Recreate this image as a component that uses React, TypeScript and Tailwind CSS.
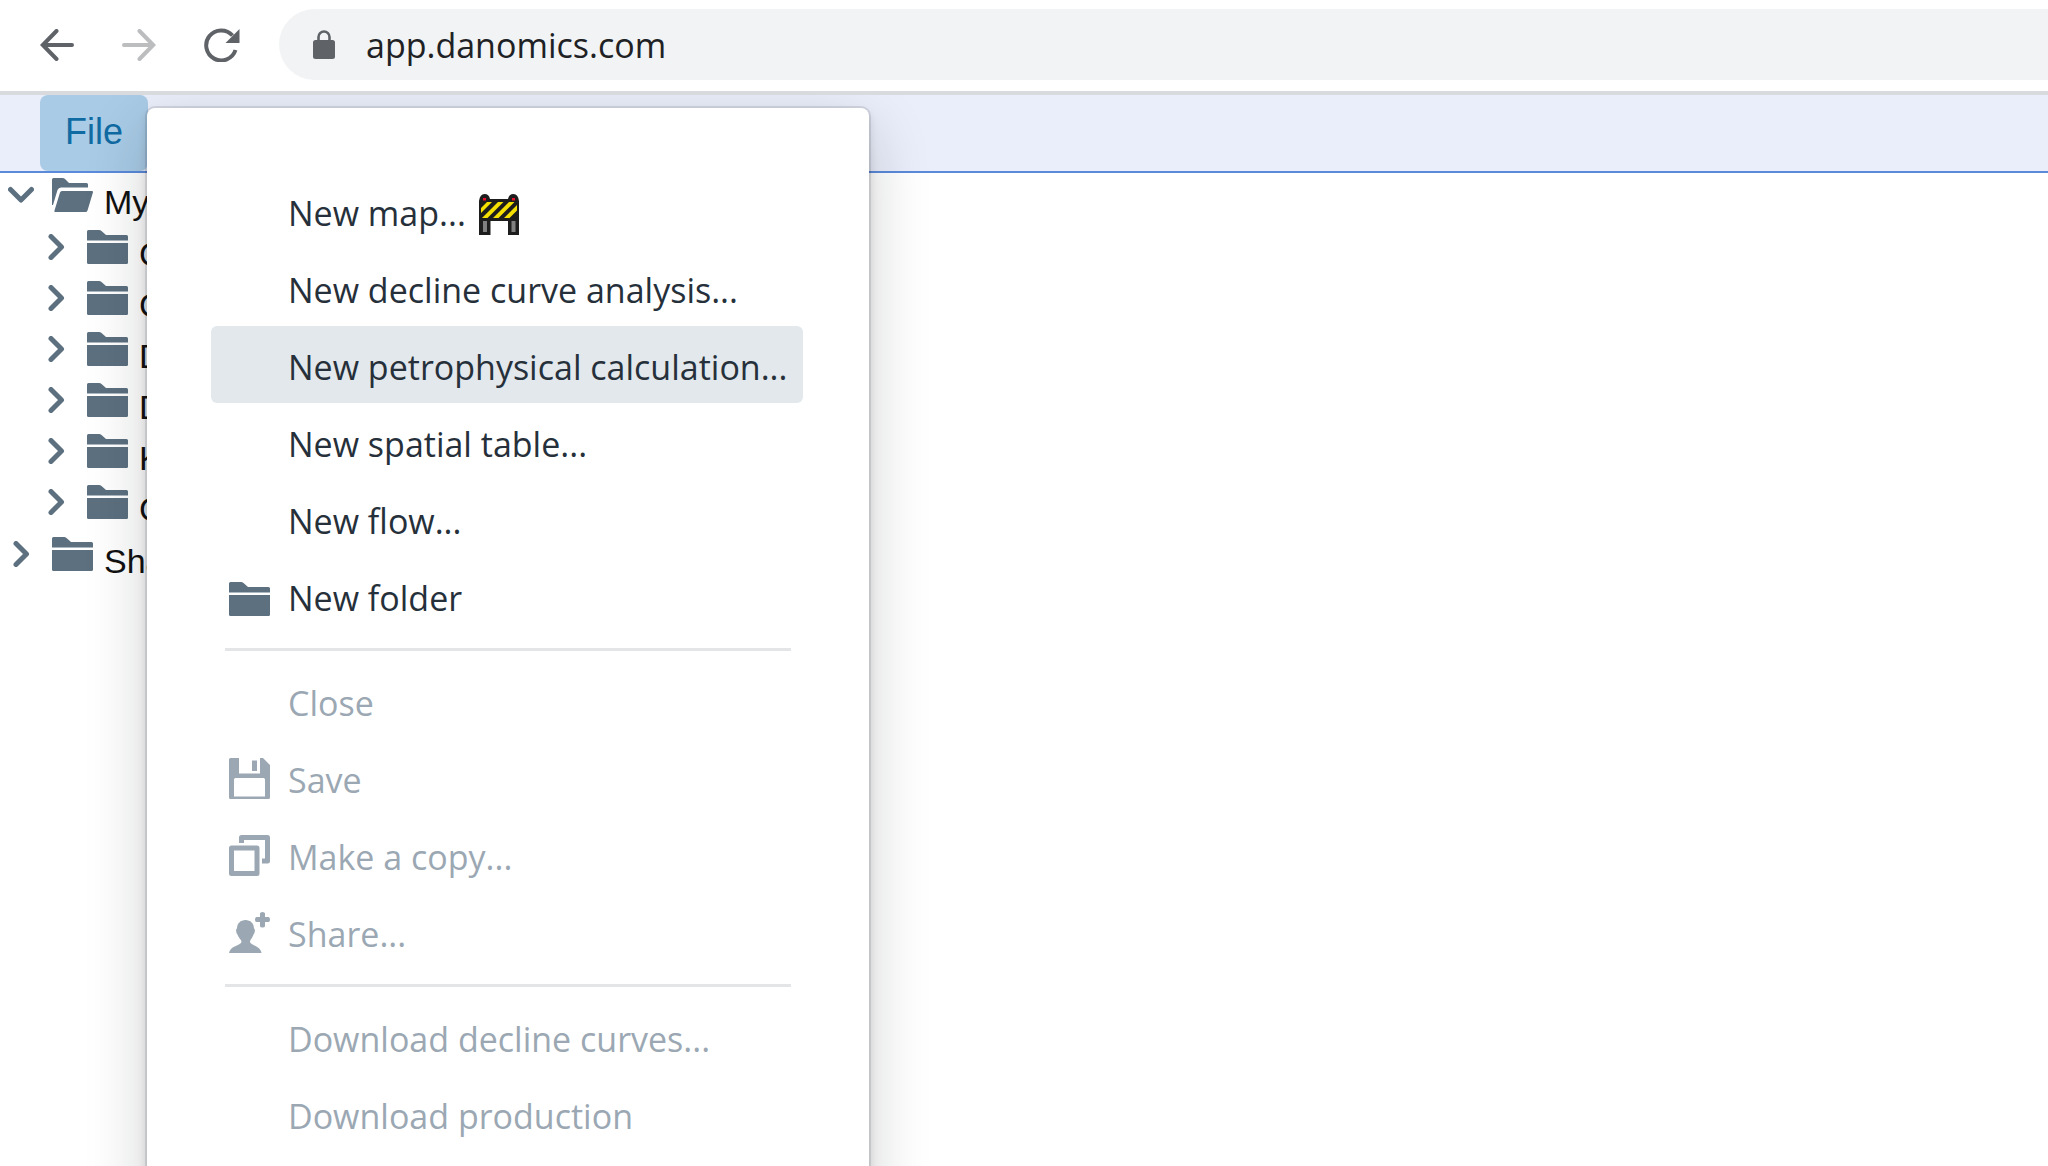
import type { ReactNode } from 'react';
import clsx from 'clsx';

interface IconProps {
  className?: string;
}

function BackIcon({ className }: IconProps) {
  return (
    <svg viewBox="0 0 34 32" className={className} fill="none" stroke="currentColor" strokeWidth="4" strokeLinecap="round">
      <path d="M32 16H3M16.5 2L2.8 16L16.5 30" />
    </svg>
  );
}

function ForwardIcon({ className }: IconProps) {
  return (
    <svg viewBox="0 0 34 32" className={className} fill="none" stroke="currentColor" strokeWidth="4" strokeLinecap="round">
      <path d="M2 16H31M17.5 2L31.2 16L17.5 30" />
    </svg>
  );
}

function ReloadIcon({ className }: IconProps) {
  return (
    <svg viewBox="0 0 36 34" className={className} fill="none" stroke="currentColor" strokeWidth="4">
      <path d="M31.5 22A15 15 0 1 1 28.5 7.5" />
      <path d="M35.5 1V15H21.5Z" fill="currentColor" stroke="none" />
    </svg>
  );
}

function LockIcon({ className }: IconProps) {
  return (
    <svg viewBox="0 0 22 29" className={className} fill="none">
      <rect y="10" width="22" height="19" rx="2.5" fill="currentColor" />
      <path d="M5.5 11V7a5.5 5.5 0 0 1 11 0v4" stroke="currentColor" strokeWidth="2.6" />
    </svg>
  );
}

function FolderIcon({ className }: IconProps) {
  return (
    <svg viewBox="0 0 41 34" className={className} fill="currentColor">
      <path d="M0 1.5Q0 0 1.5 0H12q1.5 0 2.5 1L19 5H39.5Q41 5 41 6.5V10.5H0Z" />
      <path d="M0 13H41V32.5Q41 34 39.5 34H1.5Q0 34 0 32.5Z" />
    </svg>
  );
}

function FolderOpenIcon({ className }: IconProps) {
  return (
    <svg viewBox="0 0 41 34" className={className} fill="currentColor">
      <path d="M0 1.5Q0 0 1.5 0H10.5q1.5 0 2.5 1L17 5H34.5Q36 5 36 6.5V9.5H9Q6.5 9.5 5.5 12L1 27H0Z" />
      <path d="M10 13H40Q41.4 13 41 14.3L35.5 32.5Q35 34 33.5 34H3.5Q2 34 2.5 32.5L8 14.5Q8.5 13 10 13Z" />
    </svg>
  );
}

function SaveIcon({ className }: IconProps) {
  return (
    <svg viewBox="0 0 41 41" className={className} fill="currentColor">
      <path
        fillRule="evenodd"
        d="M1.5 0H10V15.5H31V0H34L41 7V39.5Q41 41 39.5 41H1.5Q0 41 0 39.5V1.5Q0 0 1.5 0ZM5 21.5V38.5H36V21.5Q36 20 34.5 20H6.5Q5 20 5 21.5Z"
      />
      <path d="M23 2.5H28V13H23Z" />
    </svg>
  );
}

function CopyIcon({ className }: IconProps) {
  return (
    <svg viewBox="0 0 41 41" className={className} fill="none" stroke="currentColor" strokeWidth="5" strokeLinejoin="round">
      <path d="M2.5 13H28V38.5H2.5Z" />
      <path d="M12.5 8V2.5H38.5V26H33" />
    </svg>
  );
}

function ShareIcon({ className }: IconProps) {
  return (
    <svg viewBox="0 0 41 41" className={className} fill="currentColor">
      <path d="M16.5 8C21.5 8 25 11.5 25 16.5C26.5 17 26 21 24.5 22.5C23.5 26 21 27.5 21 30C22 33.5 31.5 34 32.5 41H0C1 34 11.5 33.5 12.5 30C12.5 27.5 9.5 26 8.5 22.5C7 21 6.5 17 8 16.5C8 11.5 11.5 8 16.5 8Z" />
      <path d="M31 1.5Q31 0 33.5 0Q36 0 36 1.5V5H39.5Q41 5 41 7.5Q41 10 39.5 10H36V14Q36 15.5 33.5 15.5Q31 15.5 31 14V10H27.5Q26 10 26 7.5Q26 5 27.5 5H31Z" />
    </svg>
  );
}

function BarrierIcon({ className }: IconProps) {
  return (
    <svg viewBox="0 0 42 42" className={className}>
      <path d="M1 8Q2 1 6.5 1T12 6H30Q31 1 35.5 1T41 8V28H1Z" fill="#1d1d1d" />
      <path d="M1 25H12.5V42H1ZM30 25H41V42H30Z" fill="#1d1d1d" />
      <path d="M5 28H9V39H5ZM33.5 28H37.5V39H33.5Z" fill="#808080" />
      <path d="M5 5h3v2.5h-3zM34 5h3v2.5h-3z" fill="#e8112d" />
      <path
        d="M3 15L9 9H14L3 20ZM4 25L20 9H25.5L9.5 25ZM15 25L31 9H36.5L20.5 25ZM26 25L39 12V17.5L31.5 25Z"
        fill="#f5e000"
      />
    </svg>
  );
}

function Caret({ open }: { open?: boolean }) {
  return (
    <svg
      viewBox="0 0 26 26"
      className="size-[26px]"
      fill="none"
      stroke="currentColor"
      strokeWidth="5"
      strokeLinecap="round"
      strokeLinejoin="round"
    >
      <path d={open ? 'M2.5 7.5L13 18L23.5 7.5' : 'M8 2.5L18.5 13L8 23.5'} />
    </svg>
  );
}

interface TreeRowProps {
  label: string;
  open?: boolean;
  nested?: boolean;
}

function TreeRow({ label, open, nested }: TreeRowProps) {
  return (
    <div className={clsx('flex h-[51px] items-center pb-2', nested ? 'pl-[43px]' : 'pl-2')}>
      <button type="button" aria-label={`Toggle ${label}`} className="text-[#5c7080]">
        <Caret open={open} />
      </button>
      <span className="ml-[18px] text-[#5c7080]">
        {open ? (
          <FolderOpenIcon className="h-[34px] w-[41px]" />
        ) : (
          <FolderIcon className="h-[34px] w-[41px]" />
        )}
      </span>
      <span className="ml-[11px] pt-3.5 text-[34px] leading-9 text-[#111]">{label}</span>
    </div>
  );
}

interface MenuItemProps {
  label: string;
  icon?: ReactNode;
  badge?: ReactNode;
  active?: boolean;
  disabled?: boolean;
}

function MenuItem({ label, icon, badge, active, disabled }: MenuItemProps) {
  return (
    <li>
      <button
        type="button"
        disabled={disabled}
        className={clsx(
          'flex h-[77px] w-full items-center rounded-md pt-1.5 pl-[18px] text-left',
          disabled ? 'text-[#9ba8b3]' : 'text-[#26303a]',
          active && 'bg-[#e3e8ec]'
        )}
      >
        <span className={clsx('w-[41px] shrink-0', disabled ? 'pb-1' : 'text-[#5c7080]')}>{icon}</span>
        <span className="ml-[18px] whitespace-nowrap">{label}</span>
        {badge}
      </button>
    </li>
  );
}

function MenuDivider() {
  return <li role="separator" className="mt-3.5 mr-3 mb-[11px] ml-3.5 h-[3px] bg-[#e4e5e6]" />;
}

const folders = ['C', 'C', 'D', 'D', 'K', 'C'];

export default function App() {
  return (
    <div className="flex h-screen flex-col overflow-hidden bg-white font-['Liberation_Sans',Arial,sans-serif]">
      <header className="flex h-[95px] shrink-0 items-center border-b-4 border-[#d9dadd] pb-0.5 pl-10">
        <button type="button" aria-label="Back" className="text-[#5f6368]">
          <BackIcon className="h-8 w-[34px]" />
        </button>
        <button type="button" aria-label="Forward" disabled className="ml-12 text-[#bbbdbf]">
          <ForwardIcon className="h-8 w-[34px]" />
        </button>
        <button type="button" aria-label="Reload" className="ml-12 text-[#5f6368]">
          <ReloadIcon className="h-[34px] w-9" />
        </button>
        <label className="ml-[39px] flex h-[71px] flex-1 items-center rounded-l-full bg-[#f1f3f4] pl-[34px] text-[#5f6368]">
          <LockIcon className="h-[29px] w-[22px]" />
          <input
            type="text"
            aria-label="Address"
            defaultValue="app.danomics.com"
            className="ml-[31px] flex-1 bg-transparent pt-0.5 font-['Open_Sans',sans-serif] text-[34px] text-[#202124] outline-none"
          />
        </label>
      </header>

      <div className="relative flex-1 overflow-hidden">
        <nav className="flex h-[78px] border-b-2 border-[#5b8adb] bg-[#eaeefa] pl-10">
          <button
            type="button"
            className="h-[76px] rounded-lg bg-[#a9cbe6] px-[25px] pb-0.5 text-[36px] text-[#106ba3]"
          >
            File
          </button>
        </nav>

        <ul>
          <li>
            <TreeRow label="My" open />
            <ul className="py-px">
              {folders.map((name, i) => (
                <li key={i}>
                  <TreeRow label={name} nested />
                </li>
              ))}
            </ul>
          </li>
          <li>
            <TreeRow label="Sha" />
          </li>
        </ul>

        <ul className="absolute top-[13px] left-[147px] h-[1400px] w-[722px] rounded-lg bg-white pt-16 pr-[66px] pl-16 font-['Open_Sans',sans-serif] text-[34px] shadow-[0_0_0_2px_rgba(16,22,26,0.1),0_5px_10px_rgba(16,22,26,0.15),0_20px_62px_rgba(16,22,26,0.2)]">
          <MenuItem label="New map..." badge={<BarrierIcon className="ml-3 size-[42px]" />} />
          <MenuItem label="New decline curve analysis..." />
          <MenuItem label="New petrophysical calculation..." active />
          <MenuItem label="New spatial table..." />
          <MenuItem label="New flow..." />
          <MenuItem label="New folder" icon={<FolderIcon className="h-[34px] w-[41px]" />} />
          <MenuDivider />
          <MenuItem label="Close" disabled />
          <MenuItem label="Save" icon={<SaveIcon className="size-[41px]" />} disabled />
          <MenuItem label="Make a copy..." icon={<CopyIcon className="size-[41px]" />} disabled />
          <MenuItem label="Share..." icon={<ShareIcon className="size-[41px]" />} disabled />
          <MenuDivider />
          <MenuItem label="Download decline curves..." disabled />
          <MenuItem label="Download production" disabled />
        </ul>
      </div>
    </div>
  );
}
